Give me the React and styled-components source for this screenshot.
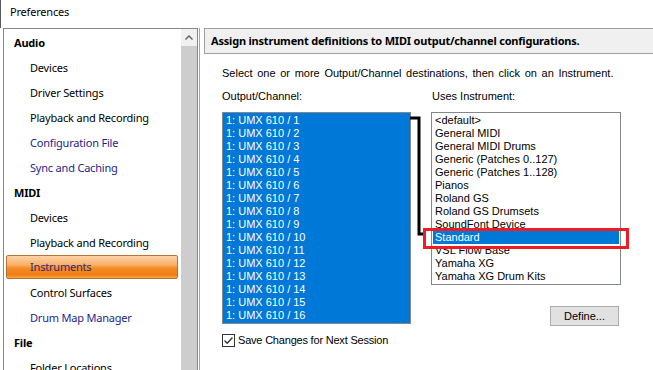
import React from 'react';
import styled, { createGlobalStyle } from 'styled-components';

const uiFont = `"Noto Sans", "Open Sans", sans-serif`;
const msFont = `"Liberation Sans", Arial, sans-serif`;

const Global = createGlobalStyle`
  html, body { margin: 0; padding: 0; background: #fff; }
  body { width: 653px; height: 370px; overflow: hidden; }
  * { box-sizing: border-box; }
`;

const Window = styled.div`
  width: 653px;
  height: 370px;
  overflow: hidden;
  display: flex;
  flex-direction: column;
  background: #fff;
`;

const TitleBar = styled.div`
  height: 28px;
  flex: none;
  padding: 4px 0 0 9px;
  border-left: 1px solid #5a5a5a;
  font: 11px/16px ${uiFont};
  letter-spacing: -0.2px;
  color: #000;
`;

const Main = styled.div`
  flex: 1;
  min-height: 0;
  display: flex;
`;

const LeftPanel = styled.div`
  margin-left: 3px;
  width: 195px;
  flex: none;
  border: 1px solid #828790;
  border-bottom: none;
  display: flex;
`;

const Nav = styled.div`
  flex: 1;
  min-width: 0;
  padding-top: 1px;
  display: flex;
  flex-direction: column;
`;

const NavRow = styled.div`
  height: ${p => (p.$selected ? 24 : 25)}px;
  flex: none;
  display: flex;
  align-items: center;
  white-space: nowrap;
  font: ${p => (p.$header ? 700 : 400)} 11px/14px ${uiFont};
  letter-spacing: -0.2px;
  color: ${p => (p.$link ? '#1e1e8c' : '#000')};
  padding-left: ${p => (p.$header ? 10 : 26)}px;
  ${p =>
    p.$selected &&
    `
    margin: 0 3px 1px 2px;
    padding-left: 23px;
    border: 1px solid #b87437;
    border-radius: 2px;
    color: #2a2a78;
    background: linear-gradient(to bottom, #fcd3a8 0%, #f9b06a 40%, #f48c24 55%, #f07e12 85%, #f5a448 100%);
  `}
`;

const Scrollbar = styled.div`
  width: 16px;
  flex: none;
  display: flex;
  flex-direction: column;
  background: #f0f0f0;
`;

const ScrollButton = styled.div`
  height: 17px;
  flex: none;
  display: flex;
  align-items: center;
  justify-content: center;
`;

const ScrollThumb = styled.div`
  flex: 1;
  background: #cdcdcd;
`;

const Splitter = styled.div`
  width: 1px;
  flex: none;
  margin-left: 1px;
  background: #a6a6a6;
`;

const RightPanel = styled.div`
  flex: 1;
  min-width: 0;
  margin-left: 4px;
  display: flex;
  flex-direction: column;
`;

const Header = styled.div`
  height: 26px;
  flex: none;
  border: 1px solid #a0a0a0;
  border-right: none;
  background: #f0f0f0;
  display: flex;
  align-items: center;
  padding-left: 6px;
  font: 700 11px/14px ${uiFont};
  letter-spacing: -0.2px;
  color: #000;
  white-space: nowrap;
`;

const Content = styled.div`
  padding-left: 18px;
  display: flex;
  flex-direction: column;
  font: 11px/13px ${msFont};
  color: #000;
`;

const Intro = styled.div`
  margin-top: 13px;
  white-space: nowrap;
  word-spacing: 1.6px;
`;

const LabelsRow = styled.div`
  margin-top: 10px;
  display: flex;
  gap: 20px;
`;

const Label = styled.div`
  width: ${p => p.$w}px;
  padding-left: ${p => p.$pad || 0}px;
`;

const ListsArea = styled.div`
  position: relative;
  margin-top: 9px;
  display: flex;
  gap: 20px;
  align-items: flex-start;
`;

const Column = styled.div`
  width: ${p => p.$w}px;
  display: flex;
  flex-direction: column;
`;

const ListBox = styled.div`
  border: 1px solid #828790;
  padding: 1px;
  background: ${p => (p.$filled ? '#0078d7' : '#fff')};
`;

const ListItem = styled.div`
  height: 13px;
  line-height: 13px;
  padding-left: 2px;
  white-space: nowrap;
  color: ${p => (p.$selected ? '#fff' : '#000')};
  background: ${p => (p.$selected ? '#0078d7' : 'transparent')};
`;

const CheckRow = styled.label`
  margin-top: 10px;
  display: flex;
  align-items: center;
  gap: 3px;
  white-space: nowrap;
  letter-spacing: -0.2px;
`;

const CheckBox = styled.span`
  width: 13px;
  height: 13px;
  flex: none;
  border: 1px solid #333;
  background: #fff;
  display: flex;
  align-items: center;
  justify-content: center;
`;

const Button = styled.div`
  align-self: flex-end;
  margin: 21px 2px 0 0;
  width: 69px;
  height: 20px;
  border: 1px solid #adadad;
  background: #e1e1e1;
  display: flex;
  align-items: center;
  justify-content: center;
`;

const Annotation = styled.svg`
  position: absolute;
  left: 0;
  top: 0;
  overflow: visible;
  pointer-events: none;
`;

const nav = [
  { t: 'Audio', h: true },
  { t: 'Devices' },
  { t: 'Driver Settings' },
  { t: 'Playback and Recording' },
  { t: 'Configuration File', l: true },
  { t: 'Sync and Caching', l: true },
  { t: 'MIDI', h: true },
  { t: 'Devices' },
  { t: 'Playback and Recording' },
  { t: 'Instruments', s: true },
  { t: 'Control Surfaces' },
  { t: 'Drum Map Manager', l: true },
  { t: 'File', h: true },
  { t: 'Folder Locations' },
];

const outputs = Array.from({ length: 16 }, (_, i) => `1: UMX 610 / ${i + 1}`);
const instruments = [
  '<default>',
  'General MIDI',
  'General MIDI Drums',
  'Generic (Patches 0..127)',
  'Generic (Patches 1..128)',
  'Pianos',
  'Roland GS',
  'Roland GS Drumsets',
  'SoundFont Device',
  'Standard',
  'VSL Flow Base',
  'Yamaha XG',
  'Yamaha XG Drum Kits',
];

export default function App() {
  return (
    <Window>
      <Global />
      <TitleBar>Preferences</TitleBar>
      <Main>
        <LeftPanel>
          <Nav>
            {nav.map((n, i) => (
              <NavRow key={i} $header={n.h} $link={n.l} $selected={n.s}>
                {n.t}
              </NavRow>
            ))}
          </Nav>
          <Scrollbar>
            <ScrollButton>
              <svg width="8" height="5" viewBox="0 0 8 5">
                <polyline points="0.5,4.5 4,1 7.5,4.5" fill="none" stroke="#606060" strokeWidth="1.4" />
              </svg>
            </ScrollButton>
            <ScrollThumb />
          </Scrollbar>
        </LeftPanel>
        <Splitter />
        <RightPanel>
          <Header>Assign instrument definitions to MIDI output/channel configurations.</Header>
          <Content>
            <Intro>Select one or more Output/Channel destinations, then click on an Instrument.</Intro>
            <LabelsRow>
              <Label $w={189}>Output/Channel:</Label>
              <Label $w={190} $pad={1}>Uses Instrument:</Label>
            </LabelsRow>
            <ListsArea>
              <Column $w={189}>
                <ListBox $filled>
                  {outputs.map(o => (
                    <ListItem key={o} $selected>{o}</ListItem>
                  ))}
                </ListBox>
                <CheckRow>
                  <CheckBox>
                    <svg width="11" height="11" viewBox="0 0 11 11">
                      <polyline points="1.5,5.5 4.2,8.2 9.5,2.5" fill="none" stroke="#333" strokeWidth="1.3" />
                    </svg>
                  </CheckBox>
                  Save Changes for Next Session
                </CheckRow>
              </Column>
              <Column $w={190}>
                <ListBox>
                  {instruments.map(o => (
                    <ListItem key={o} $selected={o === 'Standard'}>{o}</ListItem>
                  ))}
                </ListBox>
                <Button>Define...</Button>
              </Column>
              <Annotation width="420" height="220">
                <polyline points="188,6 197,6 197,122 203,122" fill="none" stroke="#000" strokeWidth="3" />
                <rect x="202.5" y="117.5" width="203" height="18" fill="none" stroke="#ee1c25" strokeWidth="3" />
              </Annotation>
            </ListsArea>
          </Content>
        </RightPanel>
      </Main>
    </Window>
  );
}
